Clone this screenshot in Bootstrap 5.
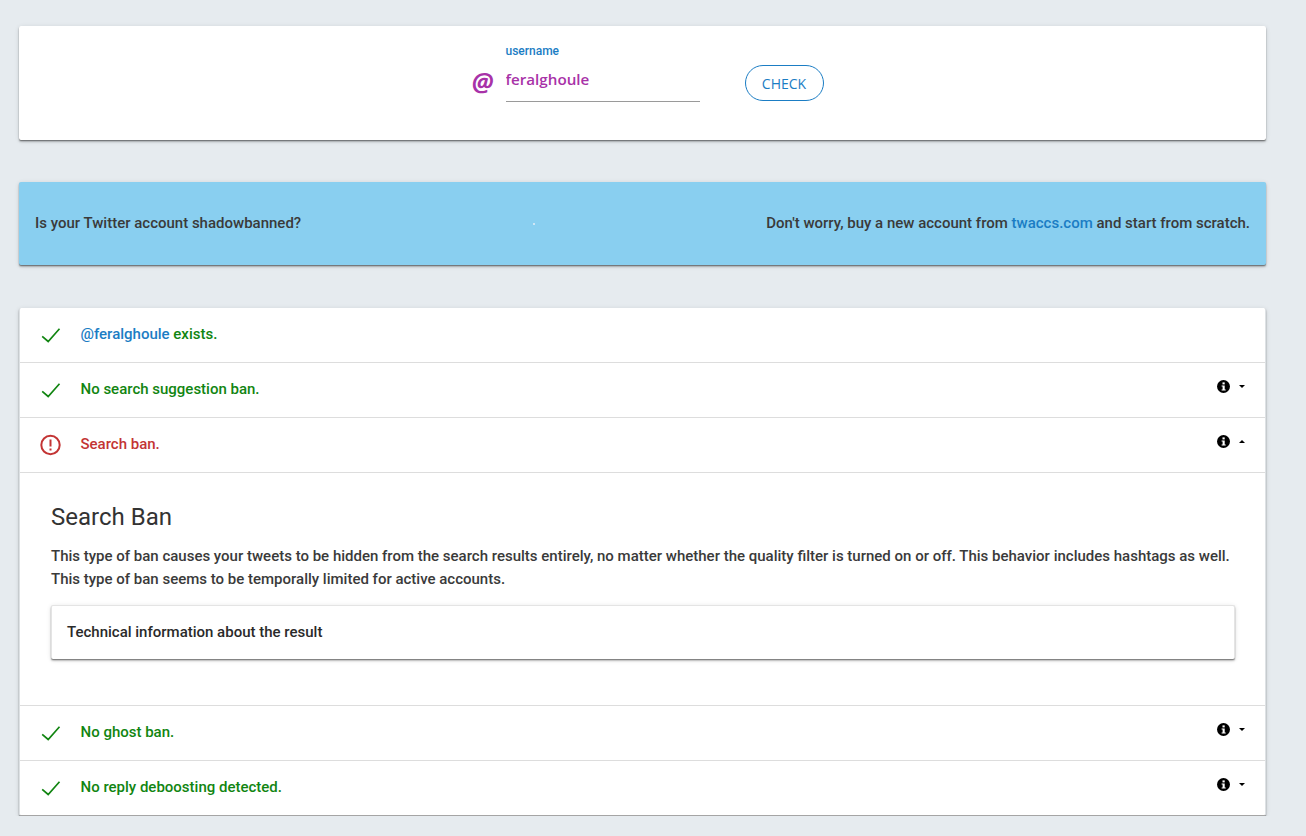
<!DOCTYPE html>
<html lang="en">
<head>
  <meta charset="UTF-8" />
  <meta name="viewport" content="width=device-width, initial-scale=1.0"/>
  <title>Shadowban Test</title>
  <link href="https://cdn.jsdelivr.net/npm/bootstrap@5.3.3/dist/css/bootstrap.min.css" rel="stylesheet" />
  <style>
    body { background: #e6ebef; font-family: Roboto, sans-serif; font-weight: 500; font-size: 15px; color: #3a3a3a; overflow: hidden; }
    .page-wrap { width: 1247px; margin-left: 19px; padding-top: 26px; }
    .panel-box { background: #fff; border-radius: 2px; box-shadow: 0 1px 1px rgba(0,0,0,.35), 0 2px 2px rgba(0,0,0,.2), 0 1px 5px rgba(0,0,0,.12); }
    .search-box { height: 114px; margin-bottom: 42px; }
    .at-sign { width: 22px; font-family: "Open Sans", sans-serif; font-size: 25px; font-weight: 700; font-style: italic; color: #a832a8; margin: 40px 12px 0 10px; line-height: 30px; text-align: center; }
    .user-field { width: 194px; margin-right: 45px; }
    .user-label { color: #1b7dc4; font-size: 12px; line-height: 14px; padding-top: 18px; height: 32px; }
    .user-input { display: block; width: 100%; border: 0; border-bottom: 1px solid #9a9a9a; border-radius: 0; outline: 0; padding: 0 0 2px; height: 44px; font-family: "Open Sans", sans-serif; font-size: 15.2px; font-weight: 600; color: #a832a8; }
    .check-btn { width: 79px; height: 36px; margin-top: 39px; padding: 0; border: 1px solid #1b7dc4; border-radius: 18px; background: #fff; color: #1b7dc4; font-family: "Open Sans", sans-serif; font-size: 14px; font-weight: 400; }
    .ad-box { background: #89cff0; height: 83px; padding: 0 16px; margin-bottom: 43px; }
    .ad-box a, .user-ref { color: #1b7dc4; text-decoration: none; }
    .ad-dot { width: 2px; height: 2px; background: #cfe6f5; }
    .list-box { border: solid #dde1e4; border-width: 0 1px; border-bottom: 1px solid #a5a5a5; }
    .result-row { height: 55px; border-bottom: 1px solid #ddd; padding: 0 20.5px 0 20px; }
    .result-row > span { margin-top: -2px; }
    .result-row:last-child { border-bottom: 0; height: 54px; }
    .result-icon { width: 22px; height: 22px; margin-right: 18.5px; flex: none; }
    .result-ok { color: #118511; }
    .result-bad { color: #c33434; }
    .row-tools { display: flex; align-items: center; gap: 9px; margin-top: -8px; }
    .tool-caret { width: 0; height: 0; border-left: 3.5px solid transparent; border-right: 3.5px solid transparent; border-top: 3.5px solid #000; }
    .tool-caret-up { border-top: 0; border-bottom: 3.5px solid #000; }
    .detail-body { padding: 28px 30px 45px 31px; border-bottom: 1px solid #ddd; height: 233px; }
    .detail-body h2 { font-size: 24px; font-weight: 400; line-height: 32px; margin: 0 0 12px; color: #333; }
    .detail-body p { line-height: 23px; margin: 0 0 14px; }
    .tech-box { height: 54px; padding-left: 15px; color: #2a2a2a; border: solid #e4e4e4; border-width: 1px 1px 0; }
  </style>
</head>
<body>
<div class="page-wrap">
  <div class="panel-box search-box d-flex justify-content-center">
    <div class="at-sign">@</div>
    <div class="user-field">
      <div class="user-label">username</div>
      <input class="user-input" type="text" value="feralghoule" />
    </div>
    <div><button class="check-btn" type="button">CHECK</button></div>
  </div>

  <div class="panel-box ad-box d-flex align-items-center justify-content-between">
    <span>Is your Twitter account shadowbanned?</span>
    <span class="ad-dot"></span>
    <span>Don't worry, buy a new account from <a href="#">twaccs.com</a> and start from scratch.</span>
  </div>

  <div class="panel-box list-box">
    <div class="result-row d-flex align-items-center result-ok">
      <svg class="result-icon" viewBox="0 0 22 22" fill="none" stroke="#118511" stroke-width="1.7"><path d="M2.2 12.3l6 5.2L19.5 4.8"/></svg>
      <span><span class="user-ref">@feralghoule</span> exists.</span>
    </div>
    <div class="result-row d-flex align-items-center result-ok">
      <svg class="result-icon" viewBox="0 0 22 22" fill="none" stroke="#118511" stroke-width="1.7"><path d="M2.2 12.3l6 5.2L19.5 4.8"/></svg>
      <span>No search suggestion ban.</span>
      <div class="row-tools ms-auto">
        <svg width="13" height="13" viewBox="0 0 13 13"><circle cx="6.5" cy="6.5" r="6.5" fill="#000"/><rect x="5.5" y="2.4" width="2.2" height="2" fill="#fff"/><path d="M4.6 5.4h3.1v4h1v1.2H4.6V9.4h1V6.6h-1z" fill="#fff"/></svg>
        <span class="tool-caret"></span>
      </div>
    </div>
    <div class="result-row d-flex align-items-center result-bad">
      <svg class="result-icon" viewBox="0 0 22 22" fill="none" stroke="#c33434" stroke-width="2"><circle cx="10.5" cy="11" r="9.2"/><path d="M10.5 5.5v7M10.5 14.6v2"/></svg>
      <span>Search ban.</span>
      <div class="row-tools ms-auto">
        <svg width="13" height="13" viewBox="0 0 13 13"><circle cx="6.5" cy="6.5" r="6.5" fill="#000"/><rect x="5.5" y="2.4" width="2.2" height="2" fill="#fff"/><path d="M4.6 5.4h3.1v4h1v1.2H4.6V9.4h1V6.6h-1z" fill="#fff"/></svg>
        <span class="tool-caret tool-caret-up"></span>
      </div>
    </div>
    <div class="detail-body">
      <h2>Search Ban</h2>
      <p>This type of ban causes your tweets to be hidden from the search results entirely, no matter whether the quality filter is turned on or off. This behavior includes hashtags as well. This type of ban seems to be temporally limited for active accounts.</p>
      <div class="panel-box tech-box d-flex align-items-center">Technical information about the result</div>
    </div>
    <div class="result-row d-flex align-items-center result-ok">
      <svg class="result-icon" viewBox="0 0 22 22" fill="none" stroke="#118511" stroke-width="1.7"><path d="M2.2 12.3l6 5.2L19.5 4.8"/></svg>
      <span>No ghost ban.</span>
      <div class="row-tools ms-auto">
        <svg width="13" height="13" viewBox="0 0 13 13"><circle cx="6.5" cy="6.5" r="6.5" fill="#000"/><rect x="5.5" y="2.4" width="2.2" height="2" fill="#fff"/><path d="M4.6 5.4h3.1v4h1v1.2H4.6V9.4h1V6.6h-1z" fill="#fff"/></svg>
        <span class="tool-caret"></span>
      </div>
    </div>
    <div class="result-row d-flex align-items-center result-ok">
      <svg class="result-icon" viewBox="0 0 22 22" fill="none" stroke="#118511" stroke-width="1.7"><path d="M2.2 12.3l6 5.2L19.5 4.8"/></svg>
      <span>No reply deboosting detected.</span>
      <div class="row-tools ms-auto">
        <svg width="13" height="13" viewBox="0 0 13 13"><circle cx="6.5" cy="6.5" r="6.5" fill="#000"/><rect x="5.5" y="2.4" width="2.2" height="2" fill="#fff"/><path d="M4.6 5.4h3.1v4h1v1.2H4.6V9.4h1V6.6h-1z" fill="#fff"/></svg>
        <span class="tool-caret"></span>
      </div>
    </div>
  </div>
</div>
<script src="https://cdn.jsdelivr.net/npm/bootstrap@5.3.3/dist/js/bootstrap.bundle.min.js"></script>
</body>
</html>
